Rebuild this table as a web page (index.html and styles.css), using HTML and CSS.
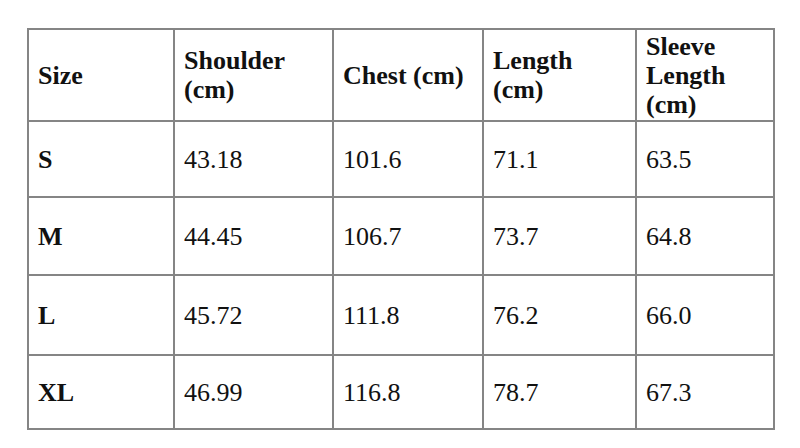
FILE: index.html
```html
<!DOCTYPE html>
<html lang="en">
<head>
<meta charset="utf-8">
<title>Size chart</title>
<link rel="stylesheet" href="styles.css">
</head>
<body>
<div class="page">
  <table class="sizes">
    <colgroup>
      <col class="c1"><col class="c2"><col class="c3"><col class="c4"><col class="c5">
    </colgroup>
    <thead>
      <tr class="head">
        <th>Size</th>
        <th>Shoulder<br>(cm)</th>
        <th>Chest (cm)</th>
        <th>Length<br>(cm)</th>
        <th>Sleeve<br>Length<br>(cm)</th>
      </tr>
    </thead>
    <tbody>
      <tr class="r1"><th>S</th><td>43.18</td><td>101.6</td><td>71.1</td><td>63.5</td></tr>
      <tr class="r2"><th>M</th><td>44.45</td><td>106.7</td><td>73.7</td><td>64.8</td></tr>
      <tr class="r3"><th>L</th><td>45.72</td><td>111.8</td><td>76.2</td><td>66.0</td></tr>
      <tr class="r4"><th>XL</th><td>46.99</td><td>116.8</td><td>78.7</td><td>67.3</td></tr>
    </tbody>
  </table>
</div>
</body>
</html>
```

FILE: styles.css
```css
html, body {
  margin: 0;
  padding: 0;
  background: #ffffff;
}

.page {
  padding: 28px 0 0 27px;
}

.sizes {
  border-collapse: collapse;
  table-layout: fixed;
  width: 746px;
  font-family: "Liberation Serif", "Times New Roman", serif;
  font-size: 26px;
  line-height: 29px;
  color: #111111;
}

.c1 { width: 146px; }
.c2 { width: 159px; }
.c3 { width: 150px; }
.c4 { width: 153px; }
.c5 { width: 138px; }

.sizes th,
.sizes td {
  border: 2px solid #858585;
  padding: 0 9px;
  text-align: left;
  vertical-align: middle;
}

.sizes th {
  font-weight: bold;
}

.sizes td {
  font-weight: normal;
}

.head { height: 92px; }
.r1 { height: 76px; }
.r2 { height: 78px; }
.r3 { height: 80px; }
.r4 { height: 74px; }
```
